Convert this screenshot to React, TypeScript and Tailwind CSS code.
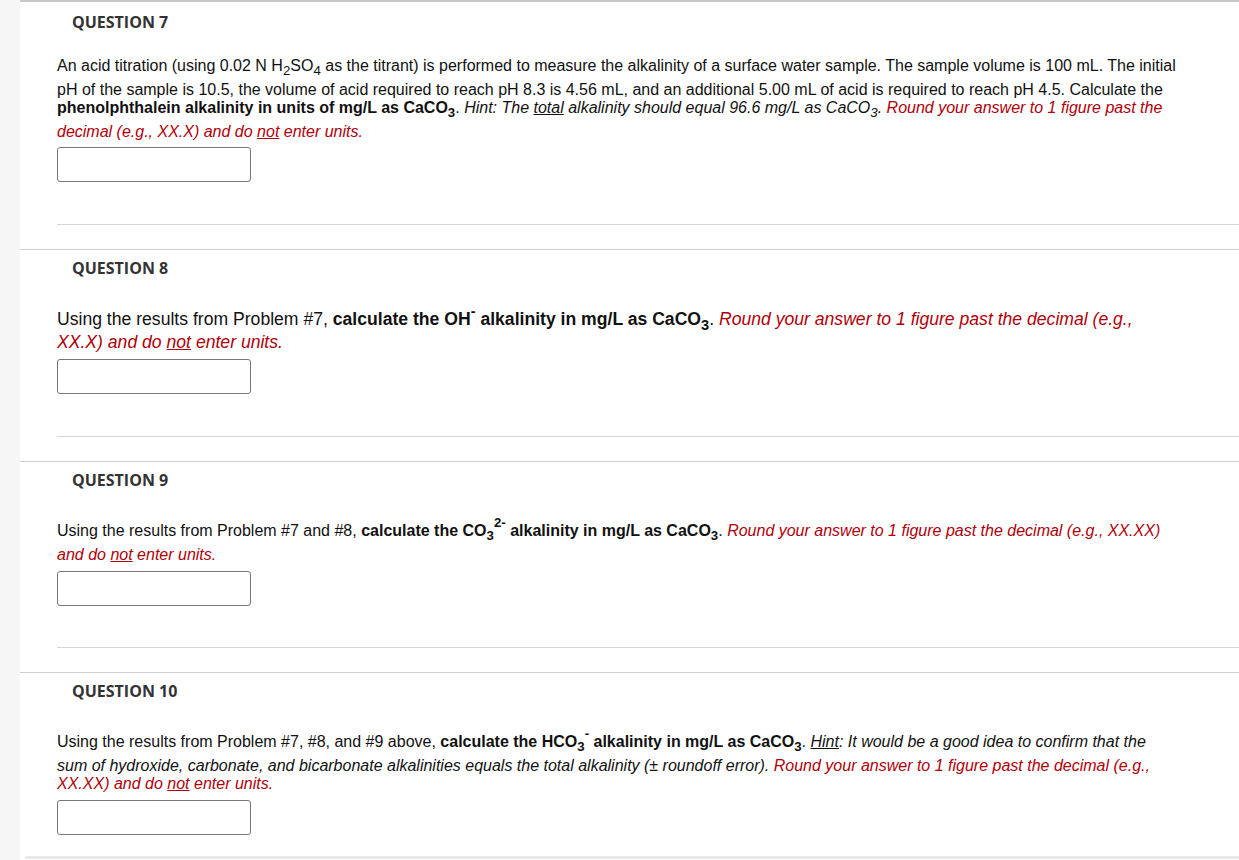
import React from "react";

const Sub = ({ children }: { children: React.ReactNode }) => (
  <span className="align-sub text-[0.83em] leading-[20px]">{children}</span>
);
const SubB = ({ children }: { children: React.ReactNode }) => (
  <span className="align-sub text-[0.83em] leading-[normal]">{children}</span>
);
const Sup = ({ children }: { children: React.ReactNode }) => (
  <span className="align-[9px] text-[0.83em] leading-[normal]">{children}</span>
);
const Red = ({ children }: { children: React.ReactNode }) => (
  <em className="italic text-[#b0000a]">{children}</em>
);

function Question({
  title,
  children,
  first,
  last,
  big,
  inputGap = "mt-[7px]",
  sepPad = "pb-[42px]",
}: {
  title: string;
  children: React.ReactNode;
  first?: boolean;
  last?: boolean;
  big?: boolean;
  inputGap?: string;
  sepPad?: string;
}) {
  return (
    <div className={last ? "pb-[21px]" : "border-b border-[#cfcfcf] pb-[24px]"}>
      <div
        className={
          first
            ? "pl-[52px] pt-[8px] text-[16px] font-bold text-[#333]"
            : "pl-[52px] pt-[6px] text-[16px] font-bold text-[#333]"
        }
        style={{ fontFamily: '"Open Sans", sans-serif' }}
      >
        {title}
      </div>
      <div className={last ? "ml-[37px]" : `ml-[37px] border-b border-[#d6d6d6] ${sepPad}`}>
        <div
          className={
            big
              ? "mt-[23px] pr-[59px] text-[17.6px] leading-[19px] text-[#111]"
              : "mt-[23px] pr-[59px] text-[16px] leading-[normal] text-[#111]"
          }
          style={{ fontFamily: '"Liberation Sans", Arial, sans-serif' }}
        >
          {children}
        </div>
        <div
          className={`${inputGap} h-[35px] w-[194px] rounded-[3px] border border-[#777] bg-white`}
        />
      </div>
    </div>
  );
}

export default function App() {
  return (
    <div className="flex min-h-[860px] bg-white">
      <div className="w-[20px] shrink-0 bg-[#f6f6f6]" />
      <div className="flex-1 border-t-2 border-[#c8c8c8]">
        <Question title="QUESTION 7" first inputGap="mt-[6px]">
          An acid titration (using 0.02 N H<Sub>2</Sub>SO<Sub>4</Sub> as the titrant) is performed to
          measure the alkalinity of a surface water sample. The sample volume is 100 mL. The initial pH
          of the sample is 10.5, the volume of acid required to reach pH 8.3 is 4.56 mL, and an
          additional 5.00 mL of acid is required to reach pH 4.5. Calculate the{" "}
          <b>
            phenolphthalein alkalinity in units of mg/L as CaCO<Sub>3</Sub>
          </b>
          .{" "}
          <em className="italic">
            Hint: The <u>total</u> alkalinity should equal 96.6 mg/L as CaCO<Sub>3</Sub>.
          </em>{" "}
          <Red>
            Round your answer to 1 figure past the decimal (e.g., XX.X) and do <u>not</u> enter units.
          </Red>
        </Question>
        <Question title="QUESTION 8" big inputGap="mt-[7px]">
          Using the results from Problem #7,{" "}
          <b>
            calculate the OH<Sup>-</Sup> alkalinity in mg/L as CaCO<SubB>3</SubB>
          </b>
          .{" "}
          <Red>
            Round your answer to 1 figure past the decimal (e.g., XX.X) and do <u>not</u> enter units.
          </Red>
        </Question>
        <Question title="QUESTION 9" sepPad="pb-[41px]">
          Using the results from Problem #7 and #8,{" "}
          <b>
            calculate the CO<Sub>3</Sub>
            <Sup>2-</Sup> alkalinity in mg/L as CaCO<Sub>3</Sub>
          </b>
          .{" "}
          <Red>
            Round your answer to 1 figure past the decimal (e.g., XX.XX) and do <u>not</u> enter units.
          </Red>
        </Question>
        <Question title="QUESTION 10" last>
          Using the results from Problem #7, #8, and #9 above,{" "}
          <b>
            calculate the HCO<Sub>3</Sub>
            <Sup>-</Sup> alkalinity in mg/L as CaCO<Sub>3</Sub>
          </b>
          .{" "}
          <em className="italic">
            <u>Hint</u>: It would be a good idea to confirm that the sum of hydroxide, carbonate, and
            bicarbonate alkalinities equals the total alkalinity (± roundoff error).
          </em>{" "}
          <Red>
            Round your answer to 1 figure past the decimal (e.g., XX.XX) and do <u>not</u> enter units.
          </Red>
        </Question>
        <div className="ml-[5px] h-[3px] bg-[#e8e8e8]" />
      </div>
    </div>
  );
}
